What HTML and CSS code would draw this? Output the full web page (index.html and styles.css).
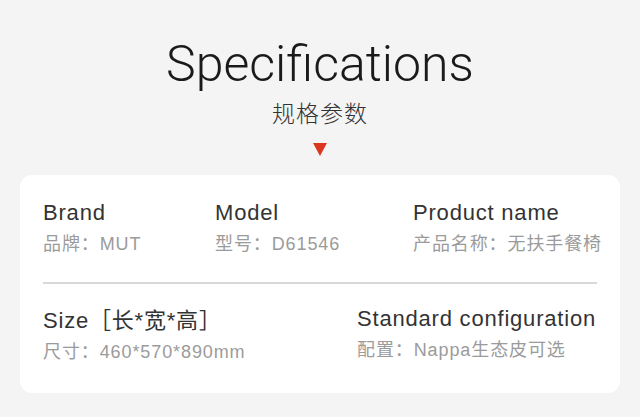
FILE: index.html
```html
<!DOCTYPE html>
<html>
<head>
<meta charset="utf-8">
<link rel="stylesheet" href="styles.css">
</head>
<body>
<div class="page">
  <header class="head">
    <h1 class="title">Specifications</h1>
    <div class="subtitle">规格参数</div>
    <div class="arrow"></div>
  </header>
  <section class="card">
    <div class="row row1">
      <div class="item">
        <div class="label">Brand</div>
        <div class="value">品牌：MUT</div>
      </div>
      <div class="item">
        <div class="label">Model</div>
        <div class="value">型号：D61546</div>
      </div>
      <div class="item">
        <div class="label">Product name</div>
        <div class="value">产品名称：无扶手餐椅</div>
      </div>
    </div>
    <div class="divider"></div>
    <div class="row row2">
      <div class="item">
        <div class="label">Size［长*宽*高］</div>
        <div class="value">尺寸：460*570*890mm</div>
      </div>
      <div class="item i-conf">
        <div class="label">Standard configuration</div>
        <div class="value">配置：Nappa生态皮可选</div>
      </div>
    </div>
  </section>
</div>
</body>
</html>
```

FILE: styles.css
```css
* { box-sizing: border-box; margin: 0; padding: 0; }
html, body { width: 640px; height: 417px; overflow: hidden; }
body {
  background: #f4f4f4;
  font-family: "Liberation Sans", "Noto Sans CJK SC", sans-serif;
  color: #333;
}
.page { padding: 0 20px; }
.head {
  display: flex;
  flex-direction: column;
  align-items: center;
  padding-top: 35px;
}
.title {
  font-family: Roboto, "Noto Sans", sans-serif;
  font-weight: 300;
  font-size: 50px;
  line-height: 58px;
  color: #1a1a1a;
}
.subtitle {
  font-family: "Noto Sans CJK SC", sans-serif;
  font-size: 23px;
  line-height: 30px;
  letter-spacing: 1px;
  color: #333;
  margin-top: 4px;
  font-weight: 300;
}
.arrow {
  margin-top: 16px;
  width: 0; height: 0;
  border-left: 7.5px solid transparent;
  border-right: 7.5px solid transparent;
  border-top: 13px solid #dd3620;
}
.card {
  margin-top: 19px;
  background: #fff;
  border-radius: 12px;
  padding: 25px 23px 0 23px;
  height: 218px;
}
.row { display: grid; }
.row1 { grid-template-columns: 172px 198px 1fr; }
.row2 { grid-template-columns: 314px 1fr; margin-top: 24px; }
.label {
  font-family: "Liberation Sans", "Noto Sans CJK SC", sans-serif;
  font-size: 22px;
  line-height: 26px;
  letter-spacing: 0.8px;
  color: #333;
  white-space: nowrap;
}
.value {
  font-family: "Liberation Sans", "Noto Sans CJK SC", sans-serif;
  font-size: 18px;
  line-height: 24px;
  letter-spacing: 0.9px;
  color: #9b9b9b;
  margin-top: 6px;
  white-space: nowrap;
}
.divider {
  height: 2px;
  background: #d9d9d9;
  margin-top: 26px;
}
.i-conf { margin-top: -2px; }
```
